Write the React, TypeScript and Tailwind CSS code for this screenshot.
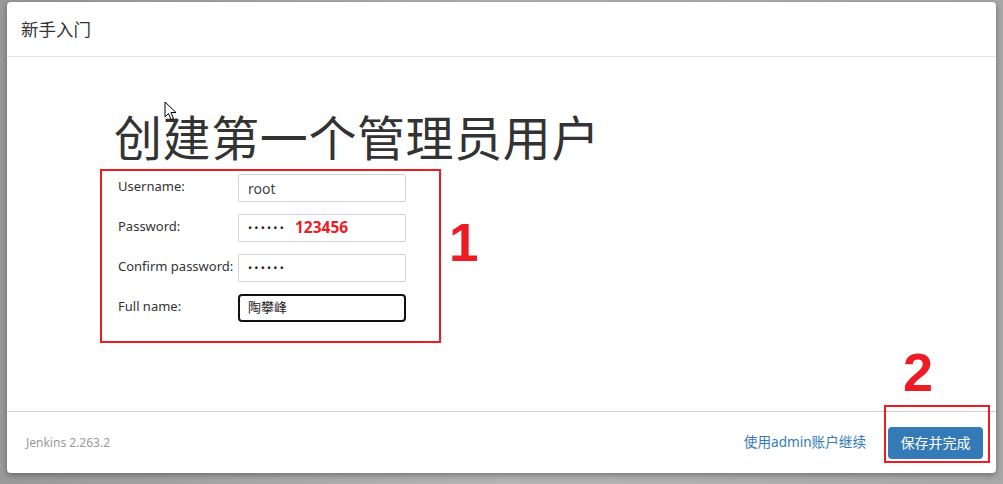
import React from 'react'

const FONT = { fontFamily: '"Noto Sans", "Noto Sans CJK SC", sans-serif' }

const FIELDS = [
  { label: 'Username:', value: 'root', type: 'text' },
  { label: 'Password:', value: '••••••', type: 'pw' },
  { label: 'Confirm password:', value: '••••••', type: 'pw' },
  { label: 'Full name:', value: '陶攀峰', type: 'focus' },
]

function Cursor() {
  return (
    <svg width="14" height="20" viewBox="0 0 14 20" className="absolute left-[164px] top-[101px]">
      <path d="M1 1 L1 16 L4.5 12.5 L7 18.5 L9.5 17.5 L7 11.5 L12 11.5 Z" fill="#fff" stroke="#000" strokeWidth="1" strokeLinejoin="round" />
    </svg>
  )
}

export default function App() {
  return (
    <div className="relative w-[1003px] h-[484px] overflow-hidden bg-gradient-to-r from-[#9a9a9a] via-[#b4b4b4] to-[#a8a8a8] pl-[7px] pt-[2px]" style={FONT}>
      <div className="w-[989px] h-[471px] bg-white rounded-[4px] shadow-[0_2px_6px_rgba(0,0,0,0.35)] flex flex-col">
        <div className="h-[55px] border-b border-[#e5e5e5] flex items-center px-[14px]">
          <span className="text-[17.5px] text-[#333]">新手入门</span>
        </div>
        <div className="flex-1 pt-[55px] pl-[107px]">
          <h1 className="text-[48px] leading-[52px] text-[#333] font-normal tracking-[0.6px]">创建第一个管理员用户</h1>
          <div className="mt-[10px] pl-[1px] flex flex-col gap-[12px]">
            {FIELDS.map(f => (
              <div key={f.label} className="flex items-center h-[28px]">
                <div className="w-[123px] pl-[3px] text-[13px] text-[#333] -mt-[3px]">{f.label}</div>
                {f.type === 'focus' ? (
                  <div className="w-[168px] h-[28px] border-2 border-[#111] rounded-[4px] flex items-center px-[8px] text-[13px] text-[#222]">{f.value}</div>
                ) : (
                  <div className="w-[168px] h-[28px] border border-[#d4d4d4] rounded-[2px] flex items-center px-[9px] text-[14px] text-[#444]">
                    <span className={f.type === 'pw' ? 'text-[11px] tracking-[2.2px] text-[#222]' : ''}>{f.value}</span>
                  </div>
                )}
              </div>
            ))}
          </div>
        </div>
        <div className="h-[62px] border-t border-[#cfcfcf] flex items-center justify-between pl-[19px] pr-[13px]">
          <span className="text-[12px] text-[#999]">Jenkins 2.263.2</span>
          <div className="flex items-center gap-[22px]">
            <span className="text-[13.6px] text-[#337ab7]">使用admin账户继续</span>
            <button className="w-[95px] h-[32px] bg-[#337ab7] rounded-[4px] text-white text-[14px]">保存并完成</button>
          </div>
        </div>
      </div>

      {/* annotations */}
      <div className="absolute left-[100px] top-[169px] w-[341px] h-[174px] border-2 border-[#ed1c24]" />
      <div className="absolute left-[295px] top-[216px] text-[15.5px] font-bold text-[#ed1c24]">123456</div>
      <div className="absolute left-[449px] top-[211px] text-[53px] font-bold leading-[64px] text-[#ed1c24]" style={{ fontFamily: '"Liberation Sans", Arial, sans-serif' }}>1</div>
      <div className="absolute left-[903px] top-[340px] text-[54px] font-bold leading-[64px] text-[#ed1c24]" style={{ fontFamily: '"Liberation Sans", Arial, sans-serif' }}>2</div>
      <div className="absolute left-[884px] top-[405px] w-[106px] h-[58px] border-2 border-[#ed1c24]" />
      <Cursor />
    </div>
  )
}
